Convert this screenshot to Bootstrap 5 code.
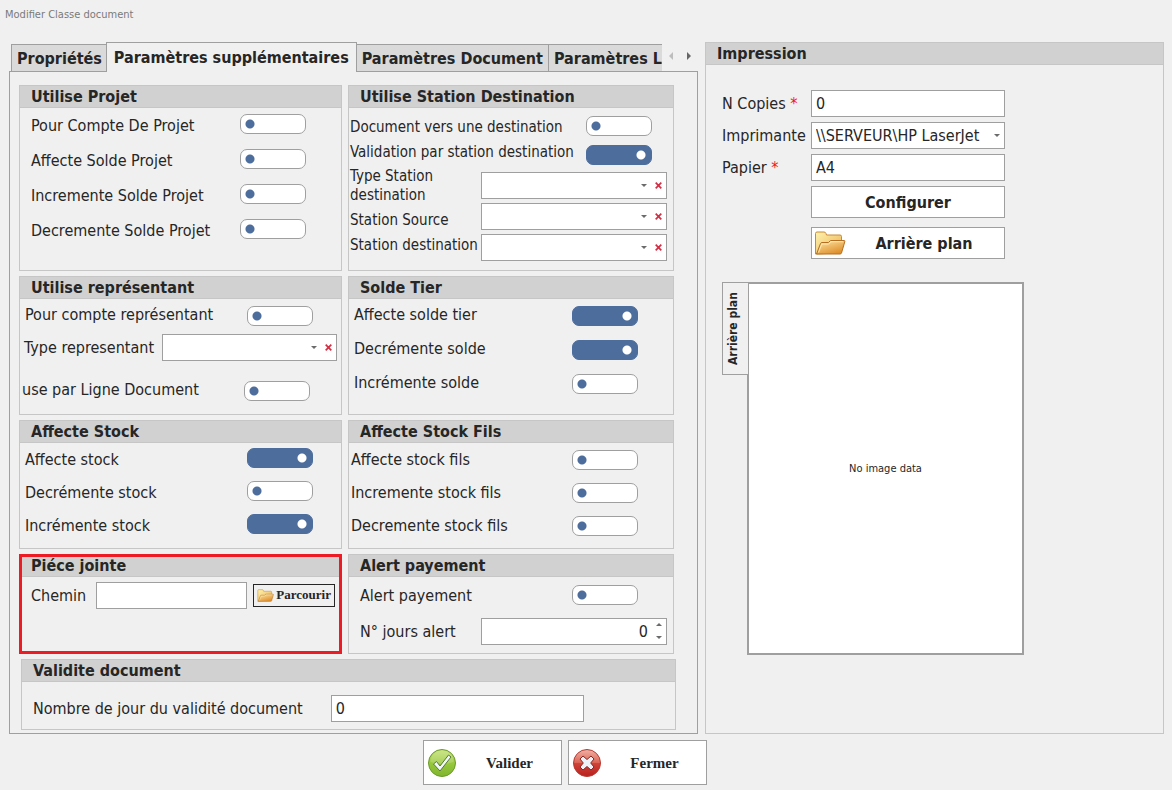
<!DOCTYPE html>
<html lang="fr">
<head>
<meta charset="utf-8">
<meta name="viewport" content="width=device-width, initial-scale=1">
<title>Modifier Classe document</title>
<link rel="stylesheet" href="https://cdn.jsdelivr.net/npm/bootstrap@5.3.0/dist/css/bootstrap.min.css">
<style>
:root{--edge:#9f9f9f;--line:#c6c6c6;--head:#d1d1d1;--page:#f0f0f0;--blue:#4d6d9d;--ink:#262626}
body{background:var(--page);color:var(--ink);font:16px/19px "DejaVu Sans Condensed","DejaVu Sans",sans-serif}
button,input,select{font:inherit;color:inherit}
.window-title{font-size:11px;line-height:14px;color:#7a7a7a;padding:8px 5px 20px;margin:0;font-weight:400}
.workspace{display:grid;grid-template-columns:minmax(0,689fr) minmax(0,459fr);gap:7px;padding:0 8px 0 9px}

/* tab strip */
.tab-strip{position:relative;z-index:1;margin-bottom:-1px;padding-left:2px}
.tab-strip .nav{overflow:hidden;min-width:0}
.tab-strip .nav-link{flex:none;height:28px;padding:0 5px;border:1px solid var(--edge);border-left-width:0;border-radius:0;background:#dadada;color:var(--ink);font-weight:700;white-space:nowrap}
.tab-strip .nav-link:first-child{border-left-width:1px;padding-right:4px}
.tab-strip .nav-link.active{height:30px;margin-left:-1px;padding:0 7px 1px;background:var(--page);border-left-width:1px;border-bottom:0}
.tab-arrow{border:0;background:none;padding:0;width:18px;height:28px;line-height:0}
.tab-page{border:1px solid var(--edge);padding:13px 23px 3px 9px}

/* group boxes */
.boxes{display:grid;grid-template-columns:minmax(0,323fr) minmax(0,326fr);gap:5px 6px}
.group{border:1px solid var(--line);border-radius:0;background:none;min-width:0;color:inherit}
.group>h2{font-size:16px;line-height:21px;height:22px;margin:0;padding:0 11px;background:var(--head);border-bottom:1px solid var(--line);font-weight:700}
.marked{outline:3px solid #ed1c24;outline-offset:-3px}
.line{display:flex;align-items:center;justify-content:space-between;height:var(--h);padding:0 var(--r) 0 var(--l)}
.line label{white-space:nowrap}
.projet{--h:35px;--l:11px;--r:35px}
.station{--h:31px;--l:1px;--r:6px;padding-bottom:7px}
.station label{font-size:15px}
.station .sw-line{--r:21px}
.represent{--h:34px;--l:5px;--r:28px;padding-bottom:5px}
.represent .wide{--h:28px;--l:4px;--r:4px}
.represent .last-line{--h:48px;--l:2px;--r:31px;padding-top:12px}
.tier{--h:34px;--l:5px;--r:35px}
.stock{--h:33px;--l:5px;--r:28px;padding-bottom:6px}
.fils{--h:33px;--l:2px;--r:35px}
.alerte{--h:36px;--l:11px;--r:35px}
.alerte .wide{--r:6px}
.chemin{margin:0 6px 0 10px}
.validite{margin:5px -2px 0 2px}
.validite>div{padding:13px 11px 7px}
.jours{flex:0 1 253px;margin-left:28px}

/* controls */
.form-check-input.toggle{flex:none;width:66px;height:20px;margin:0;border:1px solid var(--edge);border-radius:7px;background:#fff radial-gradient(circle at 9px 9px,var(--blue) 4px,transparent 5px) no-repeat}
.form-check-input.toggle:checked{border-color:var(--blue);background:var(--blue) radial-gradient(circle at 54px 9px,#fff 4px,transparent 5px) no-repeat}
.field{height:27px;border:1px solid var(--edge);border-radius:0;background:#fff;padding:0 4px;min-width:0;color:var(--ink);font-size:16px;line-height:19px}
.combo{display:flex;height:27px;border:1px solid var(--edge);background:#fff;width:186px;flex:none}
.combo select{flex:1;min-width:0;border:0;appearance:none;padding:0 24px 0 4px;background:transparent url("data:image/svg+xml,%3Csvg xmlns='http://www.w3.org/2000/svg' width='6' height='3'%3E%3Cpath d='M0 0h6L3 3z' fill='%236b6b6b'/%3E%3C/svg%3E") no-repeat right 4px center}
.combo button{border:0;background:none;padding:0;width:15px;line-height:0;text-align:center}
.combo.printer{width:194px}
.combo.printer select{padding-right:20px}
.spin{display:flex;height:27px;border:1px solid var(--edge);background:#fff;width:186px;flex:none}
.spin input{flex:1;min-width:0;border:0;background:none;text-align:right;appearance:textfield;padding:0 3px}
.spin input::-webkit-inner-spin-button{appearance:none}
.spin div{width:15px}
.spin div button{border:0;background:none;padding:0;flex:1;line-height:0;text-align:center}
.flat-btn{border:1px solid var(--edge);border-radius:0;background:#fff;color:var(--ink);font-weight:700;padding:0 2px;display:flex;align-items:center}
.browse{height:23px;width:82px;border-color:#262626;background:var(--page);font:700 13px/16px "Liberation Serif",serif;padding:0 3px;justify-content:space-between;flex:none}
.print-form{display:grid;grid-template-columns:89px 194px;row-gap:5px;align-items:center;padding:25px 16px 0}
.print-form .flat-btn{grid-column:2;height:32px}
.req{color:#f21616}
.preview{padding:23px 16px 78px}
.side-tab{writing-mode:vertical-rl;transform:rotate(180deg);width:26px;height:93px;margin-right:-1px;z-index:1;border:1px solid var(--edge);border-left:0;background:var(--page);padding:0 0 0 6px;font-size:12px;line-height:16px;font-weight:700;text-align:center}
.canvas{width:277px;height:373px;border:2px solid var(--edge);background:#fff;font-size:11px;line-height:14px}
.actions{gap:6px;padding:6px 42px 5px 0}
.actions .flat-btn{width:139px;height:45px;font:700 15px/18px "Liberation Serif",serif;padding-left:4px}
.actions span{flex:1;padding-left:4px}
</style>
</head>
<body>
<svg width="0" height="0" class="position-absolute" aria-hidden="true">
  <defs>
    <linearGradient id="fBack" x1="0" y1="0" x2="1" y2="1"><stop offset="0" stop-color="#fff3b0"/><stop offset="1" stop-color="#e9b04e"/></linearGradient>
    <linearGradient id="fFront" x1="0" y1="0" x2="0.6" y2="1"><stop offset="0" stop-color="#ffe9a6"/><stop offset="1" stop-color="#df8f2c"/></linearGradient>
    <linearGradient id="gOk" x1="0" y1="0" x2="0" y2="1"><stop offset="0" stop-color="#c3e070"/><stop offset=".5" stop-color="#98c83d"/><stop offset="1" stop-color="#7fb52c"/></linearGradient>
    <linearGradient id="gNo" x1="0" y1="0" x2="0" y2="1"><stop offset="0" stop-color="#f0b3a6"/><stop offset=".48" stop-color="#dc6656"/><stop offset=".52" stop-color="#cf4338"/><stop offset="1" stop-color="#b91f1c"/></linearGradient>
    <symbol id="folder" viewBox="0 0 32 24">
      <path d="M1.500 23V2.500Q1.500 1 3 1H10q1.500 0 2 1.500L12.500 4H26q1.500 0 1.500 1.500V10L24 22z" fill="url(#fBack)" stroke="#c98a35"/>
      <path d="M2.500 23 6.500 12.500Q7 11.500 8 11.500h6.500l2-2H30q1.200 0 .8 1.200L27.500 22q-.3 1-1.500 1z" fill="url(#fFront)" stroke="#b66f22"/>
      <path d="M4.500 21.500 7.800 13h7l2-2.300H29" fill="none" stroke="#fff2c4" stroke-width=".8"/>
    </symbol>
    <symbol id="cross" viewBox="0 0 7 7"><path d="M.7.700 6.300 6.300M6.300.700.700 6.300" stroke="#d22f45" stroke-width="1.700" fill="none"/></symbol>
  </defs>
</svg>

<h1 class="window-title">Modifier Classe document</h1>

<main class="workspace">
  <section class="d-flex flex-column">
    <div class="tab-strip d-flex align-items-end">
      <div class="nav flex-nowrap flex-grow-1 align-items-end" role="tablist">
        <button class="nav-link" role="tab" type="button">Propriétés</button>
        <button class="nav-link active" role="tab" type="button" aria-selected="true">Paramètres supplémentaires</button>
        <button class="nav-link" role="tab" type="button">Paramètres Document</button>
        <button class="nav-link" role="tab" type="button">Paramètres L</button>
      </div>
      <div class="d-flex align-self-start">
        <button class="tab-arrow" type="button" aria-label="Onglet précédent"><svg width="4" height="8"><path d="M4 0v8L0 4z" fill="#bdbdbd"/></svg></button>
        <button class="tab-arrow" type="button" aria-label="Onglet suivant"><svg width="4" height="8"><path d="M0 0v8l4-4z" fill="#666"/></svg></button>
      </div>
    </div>

    <div class="tab-page flex-grow-1">
      <div class="boxes">
        <section class="card group projet">
          <h2>Utilise Projet</h2>
          <div class="line"><label for="p1">Pour Compte De Projet</label><input class="form-check-input toggle mb-1" type="checkbox" id="p1"></div>
          <div class="line"><label for="p2">Affecte Solde Projet</label><input class="form-check-input toggle mb-1" type="checkbox" id="p2"></div>
          <div class="line"><label for="p3">Incremente Solde Projet</label><input class="form-check-input toggle mb-1" type="checkbox" id="p3"></div>
          <div class="line"><label for="p4">Decremente Solde Projet</label><input class="form-check-input toggle mb-1" type="checkbox" id="p4"></div>
        </section>

        <section class="card group station">
          <h2>Utilise Station Destination</h2>
          <div class="line sw-line pt-1"><label for="s1" class="mt-1">Document vers une destination</label><input class="form-check-input toggle" type="checkbox" id="s1"></div>
          <div class="line sw-line"><label for="s2" class="mb-1">Validation par station destination</label><input class="form-check-input toggle" type="checkbox" id="s2" checked></div>
          <div class="line"><label for="s3">Type Station<br>destination</label>
            <div class="combo"><select id="s3"></select><button type="button" aria-label="Effacer"><svg width="7" height="7"><use href="#cross"/></svg></button></div></div>
          <div class="line"><label for="s4" class="mt-2">Station Source</label>
            <div class="combo"><select id="s4"></select><button type="button" aria-label="Effacer"><svg width="7" height="7"><use href="#cross"/></svg></button></div></div>
          <div class="line"><label for="s5" class="mb-1">Station destination</label>
            <div class="combo"><select id="s5"></select><button type="button" aria-label="Effacer"><svg width="7" height="7"><use href="#cross"/></svg></button></div></div>
        </section>

        <section class="card group represent">
          <h2>Utilise représentant</h2>
          <div class="line"><label for="r1" class="mb-1">Pour compte représentant</label><input class="form-check-input toggle" type="checkbox" id="r1"></div>
          <div class="line wide"><label for="r2">Type representant</label>
            <div class="combo w-auto flex-grow-1 ms-2"><select id="r2"></select><button type="button" aria-label="Effacer"><svg width="7" height="7"><use href="#cross"/></svg></button></div></div>
          <div class="line last-line"><label for="r3" class="mb-1">use par Ligne Document</label><input class="form-check-input toggle" type="checkbox" id="r3"></div>
        </section>

        <section class="card group tier">
          <h2>Solde Tier</h2>
          <div class="line"><label for="t1" class="mb-1">Affecte solde tier</label><input class="form-check-input toggle" type="checkbox" id="t1" checked></div>
          <div class="line"><label for="t2" class="mb-1">Decrémente solde</label><input class="form-check-input toggle" type="checkbox" id="t2" checked></div>
          <div class="line"><label for="t3" class="mb-1">Incrémente solde</label><input class="form-check-input toggle" type="checkbox" id="t3"></div>
        </section>

        <section class="card group stock">
          <h2>Affecte Stock</h2>
          <div class="line"><label for="k1">Affecte stock</label><input class="form-check-input toggle mb-1" type="checkbox" id="k1" checked></div>
          <div class="line"><label for="k2">Decrémente stock</label><input class="form-check-input toggle mb-1" type="checkbox" id="k2"></div>
          <div class="line"><label for="k3">Incrémente stock</label><input class="form-check-input toggle mb-1" type="checkbox" id="k3" checked></div>
        </section>

        <section class="card group fils">
          <h2>Affecte Stock Fils</h2>
          <div class="line"><label for="f1">Affecte stock fils</label><input class="form-check-input toggle" type="checkbox" id="f1"></div>
          <div class="line"><label for="f2">Incremente stock fils</label><input class="form-check-input toggle" type="checkbox" id="f2"></div>
          <div class="line"><label for="f3">Decremente stock fils</label><input class="form-check-input toggle" type="checkbox" id="f3"></div>
        </section>

        <section class="card group alerte marked">
          <h2>Piéce jointe</h2>
          <div class="line wide"><label for="j1">Chemin</label>
            <input class="field chemin flex-grow-1" type="text" id="j1">
            <button class="flat-btn browse" type="button"><svg width="17" height="13"><use href="#folder"/></svg>Parcourir</button></div>
        </section>

        <section class="card group alerte">
          <h2>Alert payement</h2>
          <div class="line"><label for="a1">Alert payement</label><input class="form-check-input toggle" type="checkbox" id="a1"></div>
          <div class="line wide mb-1"><label for="a2">N° jours alert</label>
            <div class="spin"><input type="number" id="a2" value="0">
              <div class="d-flex flex-column">
                <button type="button" aria-label="Plus"><svg width="6" height="3"><path d="M0 3h6L3 0z" fill="#6b6b6b"/></svg></button>
                <button type="button" aria-label="Moins"><svg width="6" height="3"><path d="M0 0h6L3 3z" fill="#6b6b6b"/></svg></button>
              </div></div></div>
        </section>
      </div>

      <section class="card group validite">
        <h2>Validite document</h2>
        <div class="d-flex align-items-center">
          <label class="text-nowrap" for="v1">Nombre de jour du validité document</label>
          <input class="field jours" type="text" id="v1" value="0">
        </div>
      </section>
    </div>
  </section>

  <section class="card group print-box">
    <h2>Impression</h2>
    <div class="print-form">
      <label for="i1">N Copies <span class="req">*</span></label><input class="field" type="text" id="i1" value="0">
      <label for="i2">Imprimante</label><div class="combo printer"><select id="i2"><option>\\SERVEUR\HP LaserJet</option></select></div>
      <label for="i3">Papier <span class="req">*</span></label><input class="field" type="text" id="i3" value="A4">
      <button class="flat-btn justify-content-center" type="button">Configurer</button>
      <button class="flat-btn mt-1" type="button"><svg width="32" height="24"><use href="#folder"/></svg><span class="flex-grow-1">Arrière plan</span></button>
    </div>
    <div class="preview d-flex align-items-start">
      <button class="side-tab" type="button">Arrière plan</button>
      <div class="canvas d-flex align-items-center justify-content-center">No image data</div>
    </div>
  </section>
</main>

<footer class="actions d-flex justify-content-center">
  <button class="flat-btn" type="button">
    <svg width="28" height="28" viewBox="0 0 28 28"><circle cx="14" cy="14" r="13.500" fill="url(#gOk)" stroke="#6a9a2a"/><path d="M2.500 13a11.500 11.500 0 0 1 23 0q-11 4-23 0z" fill="#fff" opacity=".18"/><path d="m5.500 15 3-2.500 3.500 4.500L20.500 6l2.500 2L12 22z" fill="#f1f7fb" stroke="#577a2c" stroke-linejoin="round"/></svg><span>Valider</span></button>
  <button class="flat-btn" type="button">
    <svg width="28" height="28" viewBox="0 0 28 28"><circle cx="14" cy="14" r="13.500" fill="url(#gNo)" stroke="#b63a32"/><path d="M10 7 14 10.500 18 7l3 3-3.300 4 3.300 4-3 3-4-3.500-4 3.500-3-3 3.300-4L7 10z" fill="#edf2f8" stroke="#8c2622" stroke-linejoin="round"/></svg><span>Fermer</span></button>
</footer>
<script src="https://cdn.jsdelivr.net/npm/bootstrap@5.3.0/dist/js/bootstrap.bundle.min.js"></script>
</body>
</html>
